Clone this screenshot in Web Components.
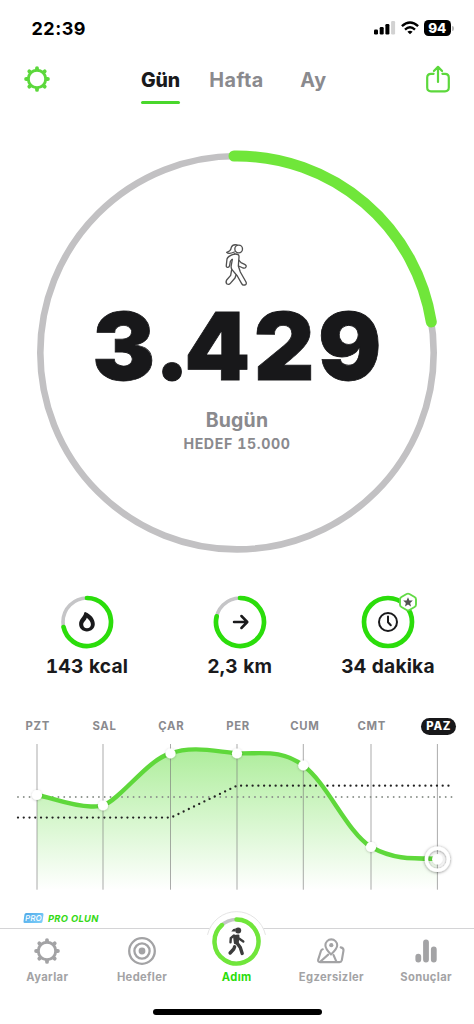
<!DOCTYPE html>
<html lang="tr">
<head>
<meta charset="utf-8">
<meta name="viewport" content="width=device-width">
<title>Adım</title>
<style>
  body{
    margin: 0;
    width: 474px;
    height: 1024px;
    overflow: hidden;
    background: #fff;
    font-family: Inter, "Liberation Sans", sans-serif;
  }
</style>
</head>
<body>
<step-app></step-app>

<script>
const define = (name, html, setup) => {
  customElements.define(name, class extends HTMLElement{
    constructor(){
      super();
      this.attachShadow({ mode: 'open' });
    }

    connectedCallback(){
      this.shadowRoot.innerHTML = typeof html == 'function' ? html(this) : html;
      if(setup) setup(this);
    }
  });
};

// progress arc, starts at twelve o'clock
const arc = (cx, cy, r, part) => {
  const a = part * Math.PI * 2;
  const x = cx + r * Math.sin(a);
  const y = cy - r * Math.cos(a);
  return `M${cx} ${cy - r}A${r} ${r} 0 ${part > .5 ? 1 : 0} 1 ${x.toFixed(2)} ${y.toFixed(2)}`;
};

const teeth = [0, 45, 90, 135, 180, 225, 270, 315].map(a =>
  `<path d="M14 4.4V3.1" transform="rotate(${a} 14 14)" stroke-width="3.8"/>`
).join('');

const icons = {
  gear: `<svg width="28" height="28" fill="none" stroke="currentColor" stroke-linecap="round">
    <circle cx="14" cy="14" r="8.7" stroke-width="2.9"/>${teeth}</svg>`,

  share: `<svg width="28" height="30" fill="none" stroke="currentColor" stroke-width="2.2" stroke-linecap="round" stroke-linejoin="round">
    <path d="M9.6 8.8H7Q3.2 8.8 3.2 12.5V22.6Q3.2 26.3 7 26.3H21Q24.8 26.3 24.8 22.6V12.5Q24.8 8.8 21 8.8H18.4M14 16.9V2.4M9.9 6L14 1.9L18.1 6"/></svg>`,

  target: `<svg width="28" height="28" fill="none" stroke="currentColor" stroke-width="2.3">
    <circle cx="14" cy="14" r="12.8"/><circle cx="14" cy="14" r="7.6"/><circle cx="14" cy="14" r="3.4" fill="currentColor" stroke="none"/></svg>`,

  map: `<svg width="28" height="28" fill="none" stroke="currentColor" stroke-width="2.1" stroke-linecap="round" stroke-linejoin="round">
    <path d="M14 17.5C10.5 14 8.4 11.4 8.4 8.3A5.9 5.9 0 0 1 20.2 8.3C20.2 11.4 17.8 14 14 17.5Z"/>
    <circle cx="14.3" cy="8.2" r="2.1" fill="currentColor" stroke="none"/>
    <path d="M5.8 12.3Q4.5 12.6 4 13.8L1.2 22.6Q.6 25.1 3 25.1H22.5Q24.3 25.1 24.8 23.3L26.5 13.5Q26.8 10.9 23.7 10.4M3.5 24.5L11.2 17.6M16.5 18L19.4 24.7"/></svg>`,

  bars: `<svg width="28" height="28" fill="none" stroke="currentColor" stroke-width="5.8" stroke-linecap="round">
    <path d="M6.3 19.6V22.6M14 5.3V22.6M21.8 12.4V22.6"/></svg>`,

  flame: `<svg width="28" height="28" fill="currentColor" fill-rule="evenodd">
    <path d="M12.6 4.2C11.9 3.9 11.3 4.3 11.2 5C10.8 8.6 6.1 10.9 6.1 16C6.1 20.4 9.5 23.4 13.9 23.4S21.8 20.4 21.8 16C21.8 10.6 17.6 6.2 12.6 4.2ZM13.8 9.8C16.4 12 17.9 14.3 17.9 16.5C17.9 18.8 16.3 20.3 14 20.3S10.2 18.8 10.2 16.5C10.2 14 13 12.8 13.8 9.8Z"/></svg>`,

  arrow: `<svg width="28" height="28" fill="none" stroke="currentColor" stroke-width="2.5" stroke-linecap="round" stroke-linejoin="round">
    <path d="M8 14H21M15.4 8L21.3 14L15.4 20"/></svg>`,

  clock: `<svg width="28" height="28" fill="none" stroke="currentColor" stroke-width="2" stroke-linecap="round" stroke-linejoin="round">
    <circle cx="14" cy="14" r="9"/><path d="M14 8.5V14.3L16.8 17.3"/></svg>`
};

define('app-icon', host => `
  <style>
    :host{
      display: block;
      flex: none;
    }
    svg{
      display: block;
      overflow: visible;
    }
  </style>
  ${icons[host.getAttribute('name')]}
`);

define('status-bar', `
  <style>
    :host{
      display: flex;
      align-items: center;
      height: 56px;
      padding: 0 20.5px 0 31.5px;
      box-sizing: border-box;
      color: #000;
    }
    time{
      flex: 1;
      font-size: 18px;
      font-weight: 700;
      letter-spacing: .5px;
    }
    svg{
      display: block;
    }
    .wifi{
      margin: 0 5px 0 5px;
    }
    .battery{
      width: 26.5px;
      height: 16px;
      border-radius: 4.5px;
      background: #000;
      color: #fff;
      font-size: 13.5px;
      font-weight: 800;
      line-height: 16px;
      text-align: center;
    }
    i{
      width: 2px;
      height: 5px;
      margin-left: 1px;
      border-radius: 0 2px 2px 0;
      background: #b9b9b9;
    }
  </style>
  <time>22:39</time>
  <svg width="22" height="14">
    <rect x="0" y="8.5" width="4" height="5" rx="1.2"/>
    <rect x="5.7" y="6" width="4" height="7.5" rx="1.2"/>
    <rect x="11.4" y="3" width="4" height="10.5" rx="1.2"/>
    <rect x="17.1" y="0" width="4" height="13.5" rx="1.2" fill="#d2d2d2"/>
  </svg>
  <svg class="wifi" width="18" height="14" fill="none" stroke="#000" stroke-width="2.4">
    <path d="M.9 5.2Q9-2.4 17.1 5.2M4 8.6Q9 4 14 8.6"/>
    <path d="M9 13.3L6.4 10.7Q9 8.7 11.6 10.7Z" fill="#000" stroke="none"/>
  </svg>
  <div class="battery">94</div><i></i>
`);

define('period-tab', `
  <style>
    :host{
      display: block;
      height: 35px;
      color: #8a8a8e;
      font-size: 19.8px;
      font-weight: 700;
      line-height: 24px;
      letter-spacing: .45px;
      box-sizing: border-box;
      white-space: nowrap;
    }
    :host([active]){
      color: #1a1a1c;
      font-size: 19.5px;
      font-weight: 800;
      letter-spacing: -.2px;
    }
    :host([active])::after{
      content: '';
      display: block;
      height: 2.5px;
      margin: 9px -.5px 0 0;
      border-radius: 2px;
      background: #49d72c;
    }
  </style>
  <slot></slot>
`);

define('top-nav', `
  <style>
    :host{
      display: flex;
      height: 64px;
      padding: 0 22px 0 23px;
      box-sizing: border-box;
      color: #5cd83c;
    }
    app-icon{
      margin-top: 9px;
    }
    nav{
      flex: 1;
      display: flex;
      gap: 29.5px;
      padding: 12.4px 0 0 90px;
    }
    period-tab:last-child{
      margin-left: 7px;
    }
  </style>
  <app-icon name="gear"></app-icon>
  <nav>
    <period-tab active>Gün</period-tab>
    <period-tab>Hafta</period-tab>
    <period-tab>Ay</period-tab>
  </nav>
  <app-icon name="share"></app-icon>
`);

define('walk-figure', `
  <style>
    :host{
      display: block;
    }
    svg{
      display: block;
    }
  </style>
  <svg width="27" height="45" viewBox="40 25 81 135" fill="none" stroke="#505050" stroke-width="4" stroke-linecap="round" stroke-linejoin="round">
    <circle cx="87" cy="43" r="11.5"/>
    <path d="M82 31Q69 28 65 38Q63 50 51 53Q57 60 74 52"/>
    <path d="M75 58Q55 63 52 73L50 91Q49 99 55 98Q59 97 60 92L62 80L67 74"/>
    <path d="M75 58Q89 57 88 67L86 94L92 112L109 142Q112 149 105 151Q99 153 96 147L83 124L67 105Q63 99 65 91L68 74"/>
    <path d="M88 77L94 84L105 89Q111 92 109 97Q106 102 100 100L87 94"/>
    <path d="M66 105L63 122L51 136Q47 143 52 148Q58 151 62 146L76 130L79 121"/>
  </svg>
`);

define('goal-ring', `
  <style>
    :host{
      display: grid;
      height: 464px;
      justify-items: center;
    }
    :host > *{
      grid-area: 1 / 1;
    }
    .content{
      display: flex;
      flex-direction: column;
      align-items: center;
      padding-top: 123px;
      color: #8a8a8e;
      font-weight: 700;
    }
    b{
      height: 111px;
      margin: 3px -3px 0 0;
      color: #18181a;
      font-size: 94px;
      font-weight: 900;
      line-height: 111px;
      letter-spacing: 3.5px;
      -webkit-text-stroke: .8px #18181a;
    }
    .lead{
      letter-spacing: -.5px;
    }
    .dot{
      letter-spacing: -5.5px;
    }
    .day{
      margin-top: 6px;
      font-size: 19.5px;
      line-height: 24px;
      letter-spacing: .2px;
    }
    .goal{
      margin-top: 3px;
      font-size: 14.2px;
      line-height: 18px;
      letter-spacing: .6px;
      font-variant-numeric: tabular-nums;
    }
  </style>
  <svg width="474" height="464" fill="none">
    <circle cx="237" cy="232.7" r="196.7" stroke="#c2c1c3" stroke-width="6.6"/>
    <path d="M234 36L${arc(237, 232.7, 196.7, .225).slice(1)}" stroke="#70e63a" stroke-width="11" stroke-linecap="round"/>
  </svg>
  <div class="content">
    <walk-figure></walk-figure>
    <b><span class="lead">3</span><span class="dot">.</span>429</b>
    <div class="day">Bugün</div>
    <div class="goal">HEDEF 15.000</div>
  </div>
`);

define('stat-ring', host => {
  const part = +host.getAttribute('part');
  return `
  <style>
    :host{
      display: flex;
      flex-direction: column;
      align-items: center;
      color: #1a1a1c;
      font-size: 19.2px;
      font-weight: 700;
      line-height: 24px;
      letter-spacing: .2px;
      font-variant-numeric: tabular-nums;
      white-space: nowrap;
    }
    .ring{
      display: grid;
      place-items: center;
      position: relative;
      width: 54px;
      height: 54px;
      margin-bottom: 5.5px;
    }
    .ring > svg, app-icon{
      grid-area: 1 / 1;
    }
    .star{
      position: absolute;
      left: 36.5px;
      top: -3px;
    }
  </style>
  <div class="ring">
    <svg width="54" height="54" fill="none" stroke-linecap="round">
      <circle cx="27" cy="27" r="24" stroke="#c5c5c7" stroke-width="3.6"/>
      ${part < 1
        ? `<path d="${arc(27, 27, 24, part)}" stroke="#2bdd0b" stroke-width="4.7"/>`
        : `<circle cx="27" cy="27" r="24" stroke="#2bdd0b" stroke-width="4.7"/>`}
    </svg>
    <app-icon name="${host.getAttribute('icon')}"></app-icon>
    ${host.hasAttribute('star') ? `
    <svg class="star" width="20" height="20">
      <path d="M8.6 2Q10 1.2 11.4 2L16.6 5Q18 5.8 18 7.4V12.6Q18 14.2 16.6 15L11.4 18Q10 18.8 8.6 18L3.4 15Q2 14.2 2 12.6V7.4Q2 5.8 3.4 5Z" fill="#fff" stroke="#62da45" stroke-width="1.9"/>
      <path d="M10 5.2L11.4 8.4L14.8 8.6L12.2 10.9L13 14.4L10 12.5L7 14.4L7.8 10.9L5.2 8.6L8.6 8.4Z" fill="#505050"/>
    </svg>` : ''}
  </div>
  <slot></slot>`;
});

define('stat-row', `
  <style>
    :host{
      display: grid;
      grid-template-columns: 151px 154.5px 142px;
      height: 126px;
      padding: 10.5px 0 0 11.5px;
      box-sizing: border-box;
    }
  </style>
  <stat-ring part=".716" icon="flame">143 kcal</stat-ring>
  <stat-ring part=".788" icon="arrow">2,3 km</stat-ring>
  <stat-ring part="1" icon="clock" star>34 dakika</stat-ring>
`);

const days = ['PZT', 'SAL', 'ÇAR', 'PER', 'CUM', 'CMT', 'PAZ'];
const points = [[37, 65], [103, 75.5], [170.5, 23.5], [237, 23.5], [303.3, 35.5], [371, 117], [437.4, 129]];
const curve = 'M37 65C50 67 70 76 91 76.5C97 76.7 100 76.5 103 75.5' +
  'C121 69 148 29 170.5 23.5C192 15 218 22 237 23.3' +
  'C263 24 281 19 303.3 35.5C328 54 346 101 371 117C393 129 409 128.7 437.4 128.7';

define('week-chart', `
  <style>
    :host{
      display: block;
      height: 190px;
      padding-top: 11px;
      box-sizing: border-box;
    }
    .days{
      display: grid;
      grid-template-columns: repeat(7, 66.8px);
      justify-items: center;
      height: 13px;
      padding-left: 4.3px;
      color: #8a8a8e;
      font-size: 11.3px;
      font-weight: 700;
      line-height: 19px;
      letter-spacing: .7px;
    }
    .today{
      height: 17px;
      margin-top: 1px;
      padding: 0 5px 0 5.5px;
      border-radius: 9px;
      background: #18181a;
      color: #fff;
      font-weight: 800;
      line-height: 17px;
    }
    svg{
      display: block;
    }
  </style>
  <div class="days">
    ${days.map((d, i) => `<span${i == 6 ? ' class="today"' : ''}>${d}</span>`).join('')}
  </div>
  <svg width="474" height="164">
    <defs>
      <linearGradient id="fill" gradientUnits="userSpaceOnUse" x1="0" y1="18" x2="0" y2="160">
        <stop offset="0" stop-color="#62dc3e" stop-opacity=".52"/>
        <stop offset="1" stop-color="#62e040" stop-opacity="0"/>
      </linearGradient>
      <filter id="shade" x="-50%" y="-50%" width="200%" height="200%">
        <feDropShadow dx="0" dy=".5" stdDeviation="1.2" flood-opacity=".25"/>
      </filter>
      <filter id="glow" x="-50%" y="-50%" width="200%" height="200%">
        <feDropShadow dx="0" dy=".5" stdDeviation="1.5" flood-opacity=".5"/>
      </filter>
    </defs>
    <path d="${curve}V160H37Z" fill="url(#fill)"/>
    <path d="${points.map(p => `M${p[0]} 14V159.7`).join('')}" stroke="#777" stroke-opacity=".62"/>
    <g fill="none" stroke-linecap="round">
      <path d="M18 67H457" stroke="#8b918b" stroke-width="1.9" stroke-dasharray="0 5.78"/>
      <path d="M18 87.6H171L237 55.7H453" stroke="#222" stroke-width="2.3" stroke-dasharray="0 5.76"/>
      <path d="${curve}" stroke="#5fd83b" stroke-width="4.4" stroke-linecap="butt"/>
    </g>
    ${points.slice(0, 6).map(p => `<circle cx="${p[0]}" cy="${p[1]}" r="5.1" fill="#fff" filter="url(#shade)"/>`).join('')}
    <circle cx="437.4" cy="129.3" r="11" fill="none" stroke="#fff" stroke-width="3.4" filter="url(#glow)"/>
    <circle cx="437.4" cy="129.3" r="5.3" fill="#fff" filter="url(#shade)"/>
  </svg>
`);

define('pro-link', `
  <style>
    :host{
      display: flex;
      align-items: center;
      gap: 5px;
      height: 28px;
      padding: 8.5px 0 0 24px;
      box-sizing: border-box;
      color: #35d916;
      font-size: 9.4px;
      font-style: italic;
      font-weight: 700;
      letter-spacing: .3px;
    }
    span{
      width: 19px;
      height: 10px;
      border-radius: 1.5px;
      transform: skewX(-8deg);
      background: linear-gradient(135deg, #4fa9e8, #7fd0fb);
      color: #fff;
      font-size: 8px;
      font-style: normal;
      font-weight: 500;
      line-height: 10px;
      letter-spacing: 0;
      text-align: center;
    }
  </style>
  <span>PRO</span><slot></slot>
`);

define('tab-item', `
  <style>
    :host{
      display: flex;
      flex-direction: column;
      align-items: center;
      position: relative;
      padding-top: 8px;
      color: #a3a3a5;
      font-size: 11.2px;
      font-weight: 700;
      letter-spacing: .35px;
    }
    :host([active]){
      color: #2bdd0b;
    }
    .label{
      margin-top: 5px;
      line-height: 15px;
    }
    .icon{
      height: 28px;
    }
  </style>
  <div class="icon"><slot name="icon"></slot></div>
  <div class="label"><slot></slot></div>
`);

// round button that stands over the edge of the bar
define('step-badge', `
  <style>
    :host{
      display: block;
      position: absolute;
      left: 50%;
      top: -18px;
      margin-left: -30.5px;
    }
    svg{
      display: block;
    }
  </style>
  <svg width="61" height="61" fill="none" stroke-linecap="round" stroke-linejoin="round">
    <circle cx="30.5" cy="30.5" r="30" fill="#fff"/>
    <path d="M1.6 23.5A29.7 29.7 0 0 1 59.4 23.5" stroke="#ddd" stroke-width=".8"/>
    <circle cx="30.5" cy="30.5" r="22" stroke="#c5c5c7" stroke-width="3.6"/>
    <path d="${arc(30.5, 30.5, 22, .885)}" stroke="#70e63a" stroke-width="4.4"/>
    <circle cx="32.2" cy="19.6" r="3" fill="#3c3c3c"/>
    <path d="M30 17.6L27.3 17.9L25.3 20.6L29 20.4Z" fill="#3c3c3c"/>
    <path d="M28.3 25.2L32.2 24.8L31.4 32L29.2 32Z" fill="#3c3c3c" stroke="#3c3c3c" stroke-width="2.6"/>
    <path d="M28 24.5L24.8 27.2L24.5 31.3M33 27.5L37.3 30.5" stroke="#3c3c3c" stroke-width="2.4"/>
    <path d="M31 32L34.3 36.6L36.2 42.5M28.6 35.8L27.8 38L24.1 42" stroke="#3c3c3c" stroke-width="3.4"/>
  </svg>
`);

define('tab-bar', `
  <style>
    :host{
      display: grid;
      grid-template-columns: repeat(5, 94.7px);
      height: 81px;
      border-top: 1px solid #d4d4d6;
      box-sizing: border-box;
    }
  </style>
  <tab-item><app-icon slot="icon" name="gear"></app-icon>Ayarlar</tab-item>
  <tab-item><app-icon slot="icon" name="target"></app-icon>Hedefler</tab-item>
  <tab-item active><step-badge slot="icon"></step-badge>Adım</tab-item>
  <tab-item><app-icon slot="icon" name="map"></app-icon>Egzersizler</tab-item>
  <tab-item><app-icon slot="icon" name="bars"></app-icon>Sonuçlar</tab-item>
`);

define('home-bar', `
  <style>
    :host{
      display: block;
      width: 169px;
      height: 6px;
      margin: 0 auto;
      border-radius: 3px;
      background: #000;
    }
  </style>
`);

define('step-app', `
  <style>
    :host{
      display: flex;
      flex-direction: column;
      width: 474px;
      height: 1024px;
    }
    :host > *{
      flex: none;
    }
    week-chart{
      margin-top: -4px;
    }
    pro-link{
      margin-top: 4px;
    }
  </style>
  <status-bar></status-bar>
  <top-nav></top-nav>
  <goal-ring></goal-ring>
  <stat-row></stat-row>
  <week-chart></week-chart>
  <pro-link>PRO OLUN</pro-link>
  <tab-bar></tab-bar>
  <home-bar></home-bar>
`);
</script>
</body>
</html>
